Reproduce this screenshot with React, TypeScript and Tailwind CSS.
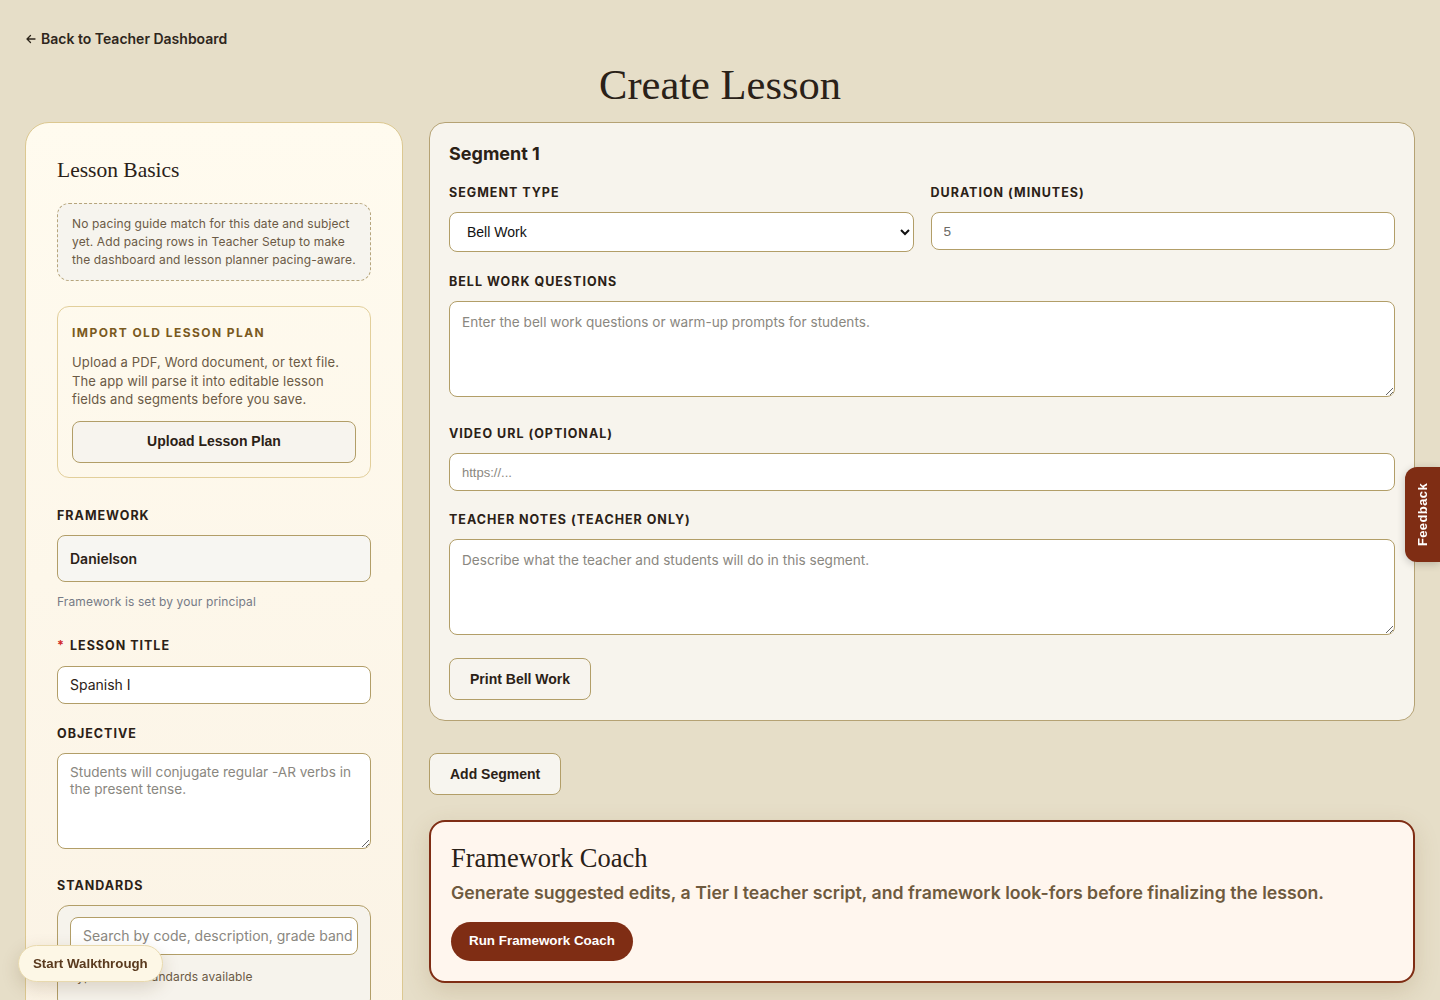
import React from 'react';

const sans = "font-['Inter','Noto_Sans',sans-serif]";
const arial = "font-['Liberation_Sans',Arial,sans-serif]";
const serif = "font-['Liberation_Serif','DejaVu_Serif',serif]";

const Label: React.FC<{ children: React.ReactNode; className?: string }> = ({ children, className = '' }) => (
  <div className={`text-[12.5px] leading-4 font-bold tracking-[0.08em] uppercase text-[#2b2116] ${className}`}>{children}</div>
);

const inputCls =
  "w-full rounded-lg border border-[#b29e68] bg-white px-3 text-[13.6px] text-[#2b2116] outline-none placeholder:text-[#8a8780]";

const App: React.FC = () => {
  return (
    <div className={`min-h-screen bg-[#e6dec8] ${sans} text-[#2b2116]`}>
      <div className="px-[25px] pt-[27px] pb-10">
        {/* back link */}
        <a className="inline-flex items-center gap-1 text-[14px] font-semibold leading-5 text-[#2e261c]">
          <svg width="12" height="12" viewBox="0 0 24 24" fill="none" stroke="currentColor" strokeWidth="2.6" strokeLinecap="round" strokeLinejoin="round">
            <path d="M20 12H5M11 5l-7 7 7 7" />
          </svg>
          Back to Teacher Dashboard
        </a>

        <h1 className={`${serif} mt-[6px] text-center text-[42.5px] leading-[56px] text-[#2a2118]`}>Create Lesson</h1>

        <div className="mt-[9px] flex items-start gap-[26px]">
          {/* left column */}
          <div className="w-[378px] shrink-0 rounded-[24px] border border-[#dcc891] bg-gradient-to-b from-[#fffbef] to-[#fbf3e5] px-[31px] pt-[31px] pb-10 h-[920px]">
            <h2 className={`${serif} text-[21.5px] leading-8 text-[#2a2118]`}>Lesson Basics</h2>

            <div className="mt-[17px] rounded-xl border border-dashed border-[#b6a57c] bg-[#f6f4ee] px-[14px] py-[11px] text-[12px] leading-[18px] tracking-[0.01em] text-[#6b5a45]">
              No pacing guide match for this date and subject yet. Add pacing rows in Teacher Setup to make the dashboard and lesson planner pacing-aware.
            </div>

            <div className="mt-[25px] rounded-xl border border-[#e2cf9b] px-[14px] pt-[18px] pb-[14px]">
              <div className="text-[12px] leading-4 font-bold tracking-[0.12em] text-[#7a5a1e]">IMPORT OLD LESSON PLAN</div>
              <p className="mt-[12px] text-[13px] leading-[18.5px] tracking-[0.01em] text-[#6b5a45]">
                Upload a PDF, Word document, or text file. The app will parse it into editable lesson fields and segments before you save.
              </p>
              <button className={`${arial} mt-[12px] h-[42px] w-full rounded-lg border border-[#b29e68] bg-[#f7f4ee] text-[14px] font-bold text-[#2b2116]`}>
                Upload Lesson Plan
              </button>
            </div>

            <Label className="mt-[30px]">Framework</Label>
            <div className="mt-[11px] flex h-[47px] items-center rounded-lg border border-[#b29e68] bg-[#f7f6f2] px-[12px] text-[14px] font-semibold text-[#2b2116]">
              Danielson
            </div>
            <div className="mt-[12px] text-[12px] leading-4 tracking-[0.01em] text-[#767b86]">Framework is set by your principal</div>

            <Label className="mt-[28px]">
              <span className="mr-[5px] text-[#d12b2b]">*</span>Lesson Title
            </Label>
            <input className={`${inputCls} mt-[12px] h-[38px] text-[14px]`} defaultValue="Spanish I" />

            <Label className="mt-[22px]">Objective</Label>
            <textarea
              className={`${inputCls} mt-[11px] block h-[96px] py-[10px] leading-[17px]`}
              placeholder="Students will conjugate regular -AR verbs in the present tense."
            />

            <Label className="mt-[29px]">Standards</Label>
            <div className="mt-[11px] rounded-xl border border-[#b29e68] bg-[#f6f3ec] px-[12px] pt-[11px] pb-6">
              <input className={`${inputCls} h-[38px] pr-1 text-[14px]`} placeholder="Search by code, description, grade band, or subject" />
              <div className="mt-[13px] text-[12px] tracking-[0.01em] text-[#6b5a45]">Type to see standards available</div>
            </div>
          </div>

          {/* right column */}
          <div className="min-w-0 flex-1">
            <div className="rounded-2xl border border-[#b5a274] bg-[#f7f4ed] px-[19px] pt-[17px] pb-[20px]">
              <h3 className="text-[18px] font-bold leading-7 text-[#2b2116]">Segment 1</h3>
              <div className="mt-[17px] grid grid-cols-2 gap-[17px]">
                <div>
                  <Label>Segment Type</Label>
                  <select className={`${arial} mt-[11px] h-[40px] w-full rounded-lg border border-[#b29e68] bg-white pl-[13px] pr-2 text-[14px] text-[#111]`} defaultValue="Bell Work">
                    <option>Bell Work</option>
                    <option>Direct Instruction</option>
                    <option>Guided Practice</option>
                  </select>
                </div>
                <div>
                  <Label>Duration (minutes)</Label>
                  <input className={`${inputCls} ${arial} mt-[11px] h-[38px] text-[#6d6a64]`} defaultValue="5" />
                </div>
              </div>

              <Label className="mt-[22px]">Bell Work Questions</Label>
              <textarea
                className={`${inputCls} mt-[11px] block h-[96px] py-[10px]`}
                placeholder="Enter the bell work questions or warm-up prompts for students."
              />

              <Label className="mt-[29px]">Video URL (optional)</Label>
              <input className={`${inputCls} ${arial} mt-[11px] h-[38px] text-[13px]`} placeholder="https://..." />

              <Label className="mt-[21px]">Teacher Notes (teacher only)</Label>
              <textarea
                className={`${inputCls} mt-[11px] block h-[96px] py-[10px]`}
                placeholder="Describe what the teacher and students will do in this segment."
              />

              <button className={`${arial} mt-[23px] h-[42px] rounded-lg border border-[#b29e68] bg-[#f7f4ee] px-[20px] text-[14px] font-bold text-[#2b2116]`}>
                Print Bell Work
              </button>
            </div>

            <button className={`${arial} mt-[32px] h-[42px] rounded-lg border border-[#b29e68] bg-[#f7f5ef] px-[20px] text-[14px] font-bold text-[#2b2116]`}>
              Add Segment
            </button>

            <div className="mt-[25px] rounded-2xl border-2 border-[#7f2d14] bg-[#fff6ee] px-[20px] pt-[18px] pb-[20px] shadow-[0_8px_24px_rgba(120,90,40,0.18)]">
              <h3 className={`${serif} text-[26.5px] leading-9 text-[#2a2118]`}>Framework Coach</h3>
              <p className="mt-[3px] text-[17.7px] font-semibold leading-7 text-[#6e5a3e]">
                Generate suggested edits, a Tier I teacher script, and framework look-fors before finalizing the lesson.
              </p>
              <button className={`${arial} mt-[15px] h-[39px] rounded-full bg-[#7f2d14] px-[18px] text-[13.4px] font-bold text-white`}>
                Run Framework Coach
              </button>
            </div>
          </div>
        </div>
      </div>

      {/* feedback tab */}
      <div className="fixed right-0 top-[467px] flex h-[95px] w-[35px] items-center justify-center rounded-l-xl bg-[#7f2d14] shadow-[0_2px_8px_rgba(0,0,0,0.2)]">
        <span className={`${arial} rotate-180 text-[13px] font-bold tracking-[0.03em] text-white [writing-mode:vertical-rl]`}>Feedback</span>
      </div>

      {/* walkthrough pill */}
      <button className={`${arial} fixed bottom-[18px] left-[18px] h-[37px] rounded-full border border-[#e8d9ae] bg-[#fdf7e6] px-[14px] text-[13.3px] font-bold text-[#5a3a1e] shadow-[0_6px_18px_rgba(90,60,20,0.18)]`}>
        Start Walkthrough
      </button>
    </div>
  );
};

export default App;
